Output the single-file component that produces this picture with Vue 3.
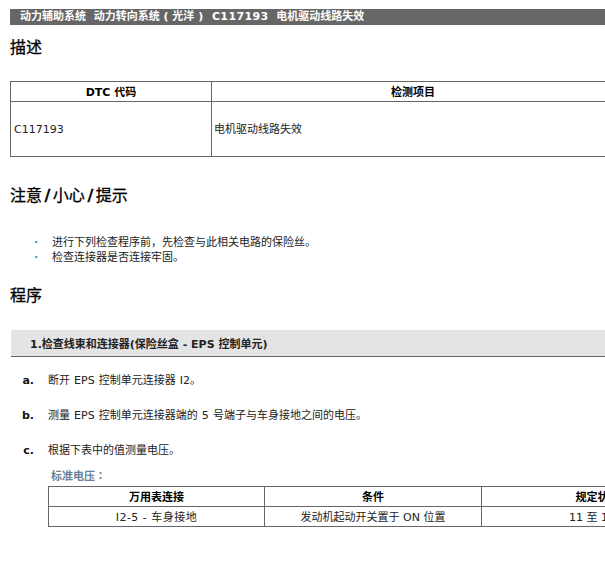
<template>
  <div class="page">
    <div class="bar">动力辅助系统&nbsp;&nbsp;动力转向系统 ( 光洋 )&nbsp;&nbsp;<span class="code">C117193</span>&nbsp;&nbsp;电机驱动线路失效</div>
    <h2 class="h h1">描述</h2>
    <table class="dtc">
      <colgroup><col class="c1" /><col class="c2" /></colgroup>
      <tbody>
        <tr class="head"><th>DTC 代码</th><th>检测项目</th></tr>
        <tr class="body"><td class="code-cell">C117193</td><td>电机驱动线路失效</td></tr>
      </tbody>
    </table>
    <h2 class="h h2">注意<span class="slash">/</span>小心<span class="slash">/</span>提示</h2>
    <ul class="notes">
      <li v-for="n in notes" :key="n"><span class="dot">·</span><span>{{ n }}</span></li>
    </ul>
    <h2 class="h h3">程序</h2>
    <div class="step">1.检查线束和连接器(保险丝盒 - EPS 控制单元)</div>
    <div v-for="s in steps" :key="s.k" class="sub">
      <b class="k">{{ s.k }}.</b><span>{{ s.t }}</span>
    </div>
    <div class="std">标准电压：</div>
    <table class="volt">
      <colgroup><col class="v1" /><col class="v2" /><col class="v3" /></colgroup>
      <tbody>
        <tr class="vhead"><th>万用表连接</th><th>条件</th><th>规定状态</th></tr>
        <tr class="vrow"><td class="wide">I2-5 - 车身接地</td><td>发动机起动开关置于 ON 位置</td><td>11 至 14 V</td></tr>
      </tbody>
    </table>
  </div>
</template>

<script setup>
const notes = ['进行下列检查程序前，先检查与此相关电路的保险丝。', '检查连接器是否连接牢固。']
const steps = [
  { k: 'a', t: '断开 EPS 控制单元连接器 I2。' },
  { k: 'b', t: '测量 EPS 控制单元连接器端的 5 号端子与车身接地之间的电压。' },
  { k: 'c', t: '根据下表中的值测量电压。' }
]
</script>

<style>
html, body { margin: 0; background: #fff; overflow: hidden; }
</style>

<style scoped>
.page {
  width: 605px;
  height: 574px;
  overflow: hidden;
  box-sizing: border-box;
  padding-top: 9px;
  font: 11px/15px "DejaVu Sans", "Noto Sans CJK SC", sans-serif;
  color: #222;
}
.bar {
  margin-left: 10px;
  height: 16px;
  padding-left: 10px;
  background: #666;
  color: #fff;
  font-weight: 700;
  white-space: nowrap;
}
.code { letter-spacing: 0.4px; margin-left: 1px; }
.h {
  margin: 0 0 0 10px;
  font-size: 16px;
  line-height: 22px;
  font-weight: 400;
  color: #000;
  -webkit-text-stroke: 0.3px #000;
}
.slash { font-weight: 700; margin: 0 2.5px; }
.h1 { margin-top: 12px; }
table {
  border-collapse: collapse;
  table-layout: fixed;
  color: #222;
}
th, td { border: 1px solid #666; padding: 0; text-align: center; }
th { font-weight: 700; color: #000; }
.dtc { margin: 22px 0 0 10px; width: 605px; }
.c1 { width: 201px; }
.dtc .head th { height: 18px; padding-top: 1px; }
.dtc .body td { height: 54px; text-align: left; padding-left: 2px; }
.dtc .body td.code-cell { padding-left: 3px; }
.h2 { margin-top: 28px; }
.notes { list-style: none; margin: 28px 0 0; padding: 0 0 0 34px; }
.notes li { display: flex; }
.dot { width: 18px; color: #39c; font-weight: 700; }
.h3 { margin-top: 20px; }
.step {
  margin: 23px 0 0 11px;
  height: 26px;
  line-height: 29px;
  padding-left: 19px;
  background: #e4e4e4;
  border-bottom: 1px solid #666;
  font-weight: 700;
  color: #222;
  white-space: nowrap;
}
.sub {
  display: flex;
  margin-top: 20px;
  white-space: nowrap;
  word-spacing: 0.6px;
}
.step + .sub { margin-top: 16px; }
.k { width: 34px; margin-right: 14px; text-align: right; color: #111; }
.std { margin: 11px 0 0 51px; color: #6b7f99; font-weight: 700; font-family: "DejaVu Sans", "Noto Sans CJK TC", sans-serif; }
.volt { margin: 2px 0 0 48px; width: 665px; }
.v1 { width: 216px; }
.v2 { width: 217px; }
.v3 { width: 232px; }
.vhead th { height: 18px; padding-top: 1px; }
.vrow td { height: 18px; padding-top: 1px; }
.wide { letter-spacing: 0.5px; }
</style>
